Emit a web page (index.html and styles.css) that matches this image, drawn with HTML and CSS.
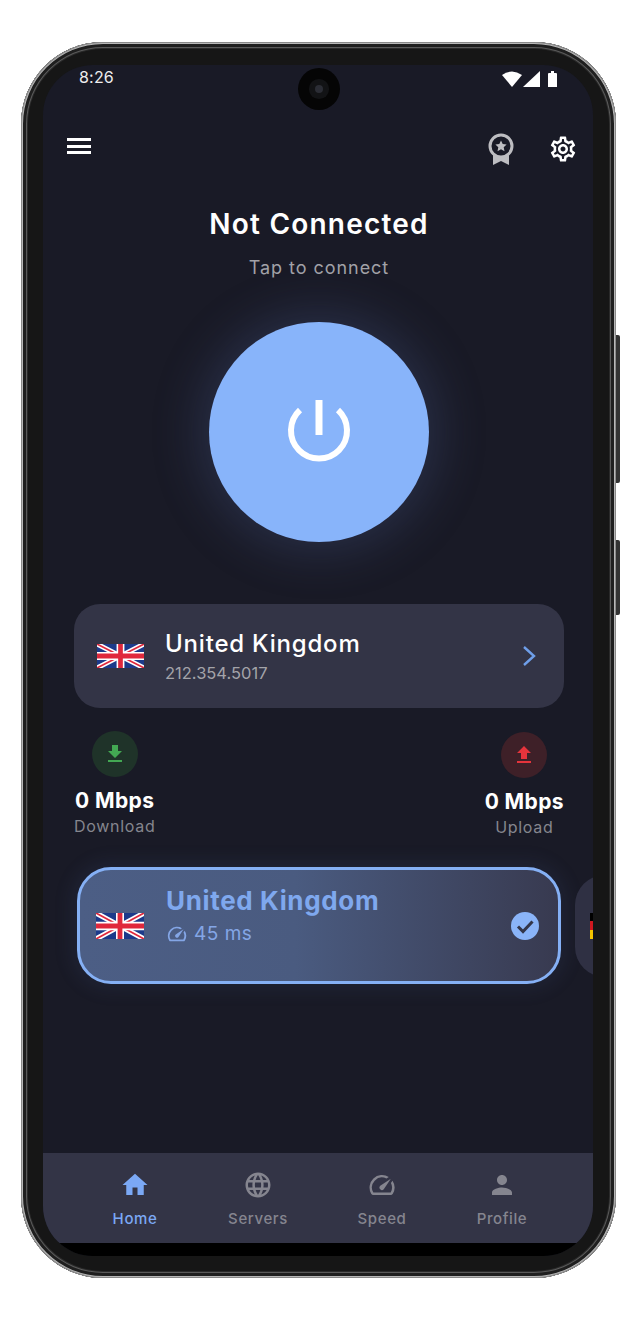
FILE: index.html
```html
<!DOCTYPE html>
<html>
<head>
  <meta charset="UTF-8">
  <title>VPN Home</title>
  <link rel="stylesheet" href="styles.css">
</head>
<body>
<svg class="defs" width="0" height="0">
  <symbol id="uk" viewBox="0 0 60 30" preserveAspectRatio="none">
    <rect width="60" height="30" fill="#1c3a8a"/>
    <path d="M0 0L60 30M60 0L0 30" stroke="#fff" stroke-width="6"/>
    <path d="M0 0L60 30M60 0L0 30" stroke="#e0283c" stroke-width="2"/>
    <path d="M30 0V30M0 15H60" stroke="#fff" stroke-width="10"/>
    <path d="M30 0V30M0 15H60" stroke="#e0283c" stroke-width="6"/>
  </symbol>
  <symbol id="speed" viewBox="0 0 24 24">
    <path d="M20.38 8.57l-1.23 1.85a8 8 0 0 1-.22 7.58H5.07A8 8 0 0 1 15.58 6.85l1.85-1.23A10 10 0 0 0 3.35 19a2 2 0 0 0 1.72 1h13.85a2 2 0 0 0 1.74-1 10 10 0 0 0-.27-10.44zm-9.79 6.84a2 2 0 0 0 2.83 0l5.66-8.49-8.49 5.66a2 2 0 0 0 0 2.83z"/>
  </symbol>
</svg>

<div class="phone">
  <div class="side-btn power-btn"></div>
  <div class="side-btn volume-btn"></div>

  <div class="screen">
    <div class="camera"><div class="lens"></div></div>

    <div class="status">
      <span class="time">8:26</span>
      <svg class="status-icons" width="58" height="17" viewBox="0 0 58 17">
        <path d="M0 4Q10 -3 20 4L10 16z" fill="#fff"/>
        <path d="M38 0V16H21z" fill="#fff"/>
        <path d="M46 3a1 1 0 0 1 1-1h2V0h3v2h2a1 1 0 0 1 1 1v13H46z" fill="#fff"/>
      </svg>
    </div>

    <div class="topbar">
      <div class="burger"><span></span><span></span><span></span></div>
      <div class="top-right">
        <svg class="badge-icon" width="26" height="32" viewBox="0 0 26 32">
          <path d="M5 21V32L13 28L21 32V21z" fill="#bdbdc1"/>
          <circle cx="13" cy="13" r="11" fill="#191a26" stroke="#bdbdc1" stroke-width="3"/>
          <path d="M13 7.5l1.7 3.6 3.9.5-2.9 2.7.8 3.9-3.5-2-3.5 2 .8-3.9-2.9-2.7 3.9-.5z" fill="#bdbdc1"/>
        </svg>
        <svg class="gear-icon" width="30" height="30" viewBox="0 0 24 24" fill="#fff">
          <path d="M19.43 12.98c.04-.32.07-.64.07-.98 0-.34-.03-.66-.07-.98l2.11-1.65c.19-.15.24-.42.12-.64l-2-3.46c-.09-.16-.26-.25-.44-.25-.06 0-.12.01-.17.03l-2.49 1c-.52-.4-1.08-.73-1.69-.98l-.38-2.65C14.46 2.18 14.25 2 14 2h-4c-.25 0-.46.18-.49.42l-.38 2.65c-.61.25-1.17.59-1.69.98l-2.49-1c-.06-.02-.12-.03-.18-.03-.17 0-.34.09-.43.25l-2 3.46c-.13.22-.07.49.12.64l2.11 1.65c-.04.32-.07.65-.07.98 0 .33.03.66.07.98l-2.11 1.65c-.19.15-.24.42-.12.64l2 3.46c.09.16.26.25.44.25.06 0 .12-.01.17-.03l2.49-1c.52.4 1.08.73 1.69.98l.38 2.65c.03.24.24.42.49.42h4c.25 0 .46-.18.49-.42l.38-2.65c.61-.25 1.17-.59 1.69-.98l2.49 1c.06.02.12.03.18.03.17 0 .34-.09.43-.25l2-3.46c.12-.22.07-.49-.12-.64l-2.11-1.65zm-1.98-1.71c.04.31.05.52.05.73 0 .21-.02.43-.05.73l-.14 1.13.89.7 1.08.84-.7 1.21-1.27-.51-1.04-.42-.9.68c-.43.32-.84.56-1.25.73l-1.06.43-.16 1.13-.2 1.35h-1.4l-.19-1.35-.16-1.13-1.06-.43c-.43-.18-.83-.41-1.23-.71l-.91-.7-1.06.43-1.27.51-.7-1.21 1.08-.84.89-.7-.14-1.13c-.03-.31-.05-.54-.05-.74s.02-.43.05-.73l.14-1.13-.89-.7-1.08-.84.7-1.21 1.27.51 1.04.42.9-.68c.43-.32.84-.56 1.25-.73l1.06-.43.16-1.13.2-1.35h1.39l.19 1.35.16 1.13 1.06.43c.43.18.83.41 1.23.71l.91.7 1.06-.43 1.27-.51.7 1.21-1.07.85-.89.7.14 1.13zM12 8c-2.21 0-4 1.79-4 4s1.79 4 4 4 4-1.79 4-4-1.79-4-4-4zm0 6c-1.1 0-2-.9-2-2s.9-2 2-2 2 .9 2 2-.9 2-2 2z"/>
        </svg>
      </div>
    </div>

    <div class="title">Not Connected</div>
    <div class="subtitle">Tap to connect</div>

    <div class="connect-btn">
      <svg width="70" height="70" viewBox="0 0 70 70" fill="none" stroke="#fff" stroke-width="6">
        <path d="M16 13A28 28 0 1 0 54 13"/>
        <path d="M35 3V38" stroke-width="7"/>
      </svg>
    </div>

    <div class="server-card">
      <svg class="flag"><use href="#uk"/></svg>
      <div class="server-text">
        <div class="server-name">United Kingdom</div>
        <div class="server-ip">212.354.5017</div>
      </div>
      <svg class="chevron" width="14" height="22" viewBox="0 0 14 22" fill="none" stroke="#6f9fea" stroke-width="2.4">
        <path d="M2 2L12 11L2 20"/>
      </svg>
    </div>

    <div class="stats">
      <div class="stat">
        <div class="stat-icon down">
          <svg width="24" height="24" viewBox="0 0 24 24" fill="#43a853"><path d="M19 9h-4V3H9v6H5l7 7 7-7zM5 18v2h14v-2H5z"/></svg>
        </div>
        <div class="stat-value">0 Mbps</div>
        <div class="stat-label">Download</div>
      </div>
      <div class="stat upload">
        <div class="stat-icon up">
          <svg width="24" height="24" viewBox="0 0 24 24" fill="#e5343c"><path d="M9 16h6v-6h4l-7-7-7 7h4zm-4 2h14v2H5z"/></svg>
        </div>
        <div class="stat-value">0 Mbps</div>
        <div class="stat-label">Upload</div>
      </div>
    </div>

    <div class="carousel">
      <div class="loc-card selected">
        <svg class="flag big"><use href="#uk"/></svg>
        <div class="loc-text">
          <div class="loc-name">United Kingdom</div>
          <div class="loc-ping">
            <svg width="22" height="22" fill="#84a6e6"><use href="#speed"/></svg>
            <span>45 ms</span>
          </div>
        </div>
        <svg class="check" width="28" height="28" viewBox="0 0 28 28">
          <circle cx="14" cy="14" r="14" fill="#8ab4f8"/>
          <path d="M7 14.5L12 19.5L21.5 9.5" fill="none" stroke="#33364a" stroke-width="3"/>
        </svg>
      </div>
      <div class="loc-card next">
        <div class="de-flag"><span class="de-b"></span><span class="de-r"></span><span class="de-y"></span></div>
      </div>
    </div>

    <div class="nav">
      <div class="nav-item active">
        <svg width="30" height="30" viewBox="0 0 24 24"><path d="M10 20v-6h4v6h5v-8h3L12 3 2 12h3v8z"/></svg>
        <span>Home</span>
      </div>
      <div class="nav-item">
        <svg width="30" height="30" viewBox="0 0 24 24"><path d="M11.99 2C6.47 2 2 6.48 2 12s4.47 10 9.99 10C17.52 22 22 17.52 22 12S17.52 2 11.99 2zm6.93 6h-2.95c-.32-1.25-.78-2.45-1.38-3.56 1.84.63 3.37 1.91 4.33 3.56zM12 4.04c.83 1.2 1.48 2.53 1.91 3.96h-3.82c.43-1.43 1.08-2.76 1.91-3.96zM4.26 14C4.1 13.36 4 12.69 4 12s.1-1.36.26-2h3.38c-.08.66-.14 1.32-.14 2 0 .68.06 1.34.14 2H4.26zm.82 2h2.95c.32 1.25.78 2.45 1.38 3.56-1.84-.63-3.37-1.9-4.33-3.56zm2.95-8H5.08c.96-1.66 2.49-2.93 4.33-3.56C8.81 5.55 8.35 6.75 8.03 8zM12 19.96c-.83-1.2-1.48-2.53-1.91-3.96h3.82c-.43 1.43-1.08 2.76-1.91 3.96zM14.34 14H9.66c-.09-.66-.16-1.32-.16-2 0-.68.07-1.35.16-2h4.68c.09.65.16 1.32.16 2 0 .68-.07 1.34-.16 2zm.25 5.56c.6-1.11 1.06-2.31 1.38-3.56h2.95c-.96 1.65-2.49 2.93-4.33 3.56zM16.36 14c.08-.66.14-1.32.14-2 0-.68-.06-1.34-.14-2h3.38c.16.64.26 1.31.26 2s-.1 1.36-.26 2h-3.38z"/></svg>
        <span>Servers</span>
      </div>
      <div class="nav-item">
        <svg width="30" height="30"><use href="#speed"/></svg>
        <span>Speed</span>
      </div>
      <div class="nav-item">
        <svg width="30" height="30" viewBox="0 0 24 24"><path d="M12 12c2.21 0 4-1.79 4-4s-1.79-4-4-4-4 1.79-4 4 1.79 4 4 4zm0 2c-2.67 0-8 1.34-8 4v2h16v-2c0-2.66-5.33-4-8-4z"/></svg>
        <span>Profile</span>
      </div>
    </div>
    <div class="chin"></div>
  </div>
</div>
</body>
</html>
```

FILE: styles.css
```css
html, body {
  margin: 0;
  background: #fff;
  font-family: "Inter", "Liberation Sans", sans-serif;
}
.defs {
  display: block;
  height: 0;
}

/* device frame */
.phone {
  position: relative;
  box-sizing: border-box;
  width: 595px;
  height: 1236px;
  margin: 42px 0 0 21px;
  padding: 23px 23px 22px 22px;
  background: #161616;
  border-radius: 82px;
  box-shadow: inset 0 0 0 1px #8a8a8a, inset 0 0 0 2px #b8b8b8, inset 0 0 0 5px #1f1f1f, inset 0 0 0 6px #5a5a5a, inset 0 0 0 7px #2a2a2a;
}
.side-btn {
  position: absolute;
  right: -4px;
  width: 4px;
  background: #333;
  border-radius: 0 2px 2px 0;
}
.power-btn {
  top: 293px;
  height: 148px;
}
.volume-btn {
  top: 498px;
  height: 75px;
}
.screen {
  position: relative;
  display: flex;
  flex-direction: column;
  height: 1191px;
  overflow: hidden;
  background: #191a26;
  border-radius: 50px;
  color: #fff;
}
.camera {
  position: absolute;
  top: 3px;
  left: 255px;
  display: flex;
  align-items: center;
  justify-content: center;
  width: 42px;
  height: 42px;
  background: #050505;
  border-radius: 50%;
}
.lens {
  width: 8px;
  height: 8px;
  border-radius: 50%;
  background: #2b2d35;
  box-shadow: 0 0 0 6px #121315;
}

.status {
  display: flex;
  align-items: center;
  justify-content: space-between;
  height: 24px;
  padding: 0 33px 0 36px;
}
.time {
  font-size: 16px;
  color: #eee;
  letter-spacing: 0.2px;
}
.status-icons {
  margin-top: 4px;
}
.topbar {
  display: flex;
  align-items: center;
  justify-content: space-between;
  height: 32px;
  margin-top: 44px;
  padding: 0 15px 0 24px;
}
.burger {
  display: flex;
  flex-direction: column;
  gap: 3.5px;
  margin-top: -6px;
}
.burger span {
  display: block;
  width: 24px;
  height: 3px;
  background: #fff;
}
.top-right {
  display: flex;
  align-items: center;
  gap: 34px;
}

.title {
  margin-top: 39px;
  padding-left: 2px;
  font-size: 28px;
  font-weight: 600;
  line-height: 40px;
  letter-spacing: 1.2px;
  text-align: center;
}
.subtitle {
  margin-top: 12px;
  padding-left: 2px;
  font-size: 18px;
  line-height: 24px;
  text-align: center;
  color: #a2a2a8;
  letter-spacing: 0.95px;
}
.connect-btn {
  display: flex;
  align-items: center;
  justify-content: center;
  flex-shrink: 0;
  width: 220px;
  height: 220px;
  margin: 42px 0 0 166px;
  background: #88b4fa;
  border-radius: 50%;
  box-shadow: 0 0 45px 12px rgba(72, 90, 140, 0.3);
}

.server-card {
  display: flex;
  align-items: center;
  box-sizing: border-box;
  flex-shrink: 0;
  width: 490px;
  height: 104px;
  margin: 62px 0 0 31px;
  padding: 0 28px 0 23px;
  background: #333446;
  border-radius: 26px;
}
.flag {
  display: block;
  flex-shrink: 0;
  width: 47px;
  height: 24px;
}
.flag.big {
  width: 48px;
  height: 26px;
}
.server-text {
  flex: 1;
  margin-left: 21px;
}
.server-name {
  margin-top: 2px;
  font-size: 24px;
  font-weight: 500;
  line-height: 30px;
  letter-spacing: 0.8px;
}
.server-ip {
  margin-top: 2px;
  font-size: 16.5px;
  line-height: 24px;
  color: #a3a3a9;
}

.stats {
  display: flex;
  justify-content: space-between;
  margin-top: 23px;
  padding: 0 29px 0 31px;
}
.stat {
  display: flex;
  flex-direction: column;
  align-items: center;
}
.stat.upload {
  margin-top: 1px;
}
.stat-icon {
  display: flex;
  align-items: center;
  justify-content: center;
  width: 46px;
  height: 46px;
  border-radius: 50%;
}
.stat-icon.down {
  background: #1f3329;
}
.stat-icon.up {
  background: #3e2028;
}
.stat-value {
  margin-top: 11px;
  font-size: 21px;
  font-weight: 700;
  line-height: 26px;
  letter-spacing: 0.4px;
}
.stat-label {
  margin-top: 1px;
  font-size: 16px;
  line-height: 22px;
  color: #85868e;
  letter-spacing: 0.7px;
}

.carousel {
  display: flex;
  align-items: center;
  gap: 14px;
  margin: 29px 0 0 34px;
}
.loc-card {
  display: flex;
  align-items: center;
  flex-shrink: 0;
  box-sizing: border-box;
}
.loc-card.selected {
  width: 484px;
  height: 117px;
  padding: 0 19px 0 16px;
  background: linear-gradient(to right, #4c5e85 0%, #4a5b80 45%, #383a50 100%);
  border: 3px solid #85b0f5;
  border-radius: 34px;
  box-shadow: 0 0 18px 6px rgba(72, 90, 140, 0.14);
}
.loc-card.next {
  width: 200px;
  height: 102px;
  padding-left: 15px;
  background: #2f3043;
  border-radius: 30px;
}
.de-flag {
  display: flex;
  flex-direction: column;
  width: 40px;
  height: 26px;
}
.de-flag span {
  flex: 1;
}
.de-b {
  background: #000;
}
.de-r {
  background: #d0181f;
}
.de-y {
  background: #f5c400;
}
.loc-text {
  flex: 1;
  margin: 0 0 16px 22px;
}
.loc-name {
  margin-top: -4px;
  font-size: 26px;
  font-weight: 700;
  line-height: 32px;
  letter-spacing: 0.65px;
  color: #7fa8ee;
}
.loc-ping {
  display: flex;
  align-items: center;
  gap: 6px;
  margin-top: 5px;
  font-size: 19px;
  line-height: 24px;
  letter-spacing: 0.5px;
  color: #84a6e6;
}

.nav {
  display: grid;
  grid-template-columns: 122px 124px 124px 116px;
  box-sizing: border-box;
  flex-shrink: 0;
  height: 90px;
  margin-top: auto;
  padding: 17px 0 0 31px;
  background: #333446;
}
.nav-item {
  display: flex;
  flex-direction: column;
  align-items: center;
  font-size: 15px;
  font-weight: 500;
  line-height: 20px;
  letter-spacing: 0.6px;
  color: #85858f;
  fill: #85858f;
}
.nav-item span {
  margin-top: 9px;
}
.nav-item.active {
  color: #7ba8f5;
  fill: #7ba8f5;
}
.chin {
  flex-shrink: 0;
  height: 13px;
  background: #000;
}
```
